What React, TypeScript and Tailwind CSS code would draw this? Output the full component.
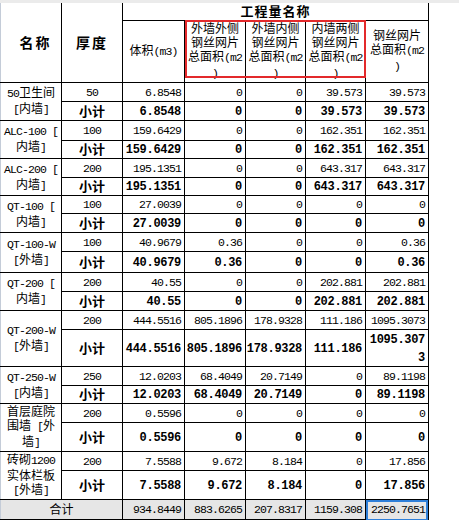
import { Fragment } from "react"

const MONO = "font-['Liberation_Mono',monospace] text-[11.5px] tracking-[-0.9px]"
const MONO_B = "font-['Liberation_Mono',monospace] text-[12px] font-bold tracking-[-0.3px]"

const TD = "border border-black p-0"
const NUM = "border border-black p-0 pr-[3px] text-right align-middle whitespace-nowrap"

type Group = {
  name: string[]
  t: string
  v: string[]
  h: [string, string]
  wrap?: boolean
}

const groups: Group[] = [
  { name: ["50卫生间", "[内墙]"], t: "50", v: ["6.8548", "0", "0", "39.573", "39.573"], h: ["h-[19px]", "h-[19px]"] },
  { name: ["ALC-100 [", "内墙]"], t: "100", v: ["159.6429", "0", "0", "162.351", "162.351"], h: ["h-[20px]", "h-[18px]"] },
  { name: ["ALC-200 [", "内墙]"], t: "200", v: ["195.1351", "0", "0", "643.317", "643.317"], h: ["h-[19px]", "h-[18px]"] },
  { name: ["QT-100 [", "内墙]"], t: "100", v: ["27.0039", "0", "0", "0", "0"], h: ["h-[18px]", "h-[19px]"] },
  { name: ["QT-100-W", "[外墙]"], t: "100", v: ["40.9679", "0.36", "0", "0", "0.36"], h: ["h-[19px]", "h-[21px]"] },
  { name: ["QT-200 [", "内墙]"], t: "200", v: ["40.55", "0", "0", "202.881", "202.881"], h: ["h-[19px]", "h-[19px]"] },
  { name: ["QT-200-W", "[外墙]"], t: "200", v: ["444.5516", "805.1896", "178.9328", "111.186", "1095.3073"], h: ["h-[19px]", "h-[34px]"], wrap: true },
  { name: ["QT-250-W", "[内墙]"], t: "250", v: ["12.0203", "68.4049", "20.7149", "0", "89.1198"], h: ["h-[19px]", "h-[18px]"] },
  { name: ["首层庭院", "围墙 [外", "墙]"], t: "200", v: ["0.5596", "0", "0", "0", "0"], h: ["h-[19px]", "h-[29px]"] },
  { name: ["砖砌1200", "实体栏板", "[外墙]"], t: "200", v: ["7.5588", "9.672", "8.184", "0", "17.856"], h: ["h-[19px]", "h-[29px]"] },
]

// ascii runs get the narrow mono face, like the sheet's SimSun
function Mix({ text, bold }: { text: string; bold?: boolean }) {
  const parts = text.match(/[\x20-\x7e]+|[^\x20-\x7e]+/g) ?? []
  return (
    <>
      {parts.map((p, i) =>
        /^[\x20-\x7e]+$/.test(p) ? (
          <span key={i} className={bold ? MONO_B : MONO}>{p}</span>
        ) : (
          <span key={i}>{p}</span>
        ),
      )}
    </>
  )
}

function Lines({ lines }: { lines: string[] }) {
  return (
    <>
      {lines.map((l, i) => (
        <Fragment key={i}>
          {i > 0 && <br />}
          <Mix text={l} />
        </Fragment>
      ))}
    </>
  )
}

export default function App() {
  return (
    <div className="w-[459px] h-[520px] bg-white overflow-hidden">
      <div className="h-[3px] bg-[#ebebeb]" />
      <div className="relative w-[428px]">
        <table className="table-fixed border-collapse w-[428px] font-['Noto_Sans_CJK_SC',sans-serif] text-[12px] leading-[14px] text-black">
          <colgroup>
            <col className="w-[61px]" />
            <col className="w-[61px]" />
            <col className="w-[62px]" />
            <col className="w-[61px]" />
            <col className="w-[60px]" />
            <col className="w-[60px]" />
            <col className="w-[63px]" />
          </colgroup>
          <tbody>
            <tr className="h-[17px]">
              <td rowSpan={2} className="border border-black border-t-0 border-l-[#c4ccd8] p-0 pl-[9px] text-center align-middle text-[14px] font-bold tracking-[2px]">
                名称
              </td>
              <td rowSpan={2} className="border border-black border-t-0 p-0 text-center align-middle text-[14px] font-bold tracking-[2px]">
                厚度
              </td>
              <td colSpan={5} className="border border-black border-t-0 p-0 text-center align-middle text-[13px] font-bold tracking-[1px]">
                工程量名称
              </td>
            </tr>
            <tr className="h-[62px]">
              <td className={`${TD} text-center align-middle`}>
                <Mix text="体积(m3)" />
              </td>
              <td className={`${TD} text-center align-middle whitespace-nowrap`}>
                <Lines lines={["外墙外侧", "钢丝网片", "总面积(m2", ")"]} />
              </td>
              <td className={`${TD} text-center align-middle whitespace-nowrap`}>
                <Lines lines={["外墙内侧", "钢丝网片", "总面积(m2", ")"]} />
              </td>
              <td className={`${TD} text-center align-middle whitespace-nowrap`}>
                <Lines lines={["内墙两侧", "钢丝网片", "总面积(m2", ")"]} />
              </td>
              <td className={`${TD} text-center align-middle whitespace-nowrap`}>
                <Lines lines={["钢丝网片", "总面积(m2", ")"]} />
              </td>
            </tr>

            {groups.map((g) => (
              <Fragment key={g.name.join("")}>
                <tr className={g.h[0]}>
                  <td rowSpan={2} className={`${TD} border-l-[#c4ccd8] text-center align-middle whitespace-nowrap`}>
                    <Lines lines={g.name} />
                  </td>
                  <td className={`${TD} text-center align-middle`}>
                    <span className={MONO}>{g.t}</span>
                  </td>
                  {g.v.map((v, i) => (
                    <td key={i} className={NUM}>
                      <span className={MONO}>{v}</span>
                    </td>
                  ))}
                </tr>
                <tr className={g.h[1]}>
                  <td className={`${TD} text-center align-middle text-[13px] font-bold`}>小计</td>
                  {g.v.map((v, i) =>
                    g.wrap && i === 4 ? (
                      <td key={i} className={`${NUM} leading-[15px]`}>
                        <span className={MONO_B}>1095.307</span>
                        <br />
                        <span className={MONO_B}>3</span>
                      </td>
                    ) : (
                      <td key={i} className={NUM}>
                        <span className={MONO_B}>{v}</span>
                      </td>
                    ),
                  )}
                </tr>
              </Fragment>
            ))}

            <tr className="h-[20px] bg-[#e6e6e6]">
              <td colSpan={2} className={`${TD} border-l-[#c4ccd8] text-center align-middle`}>
                合计
              </td>
              {["934.8449", "883.6265", "207.8317", "1159.308", "2250.7651"].map((v) => (
                <td key={v} className={NUM}>
                  <span className={MONO}>{v}</span>
                </td>
              ))}
            </tr>
          </tbody>
        </table>

        {/* red highlight over the three mesh columns */}
        <div className="absolute left-[185px] top-[17px] w-[181px] h-[58px] border-2 border-[#e3292b] pointer-events-none" />
        {/* selected cell */}
        <div className="absolute left-[366px] bottom-[-1px] w-[62px] h-[21px] border-2 border-[#2e7fd9] pointer-events-none" />
      </div>
    </div>
  )
}
